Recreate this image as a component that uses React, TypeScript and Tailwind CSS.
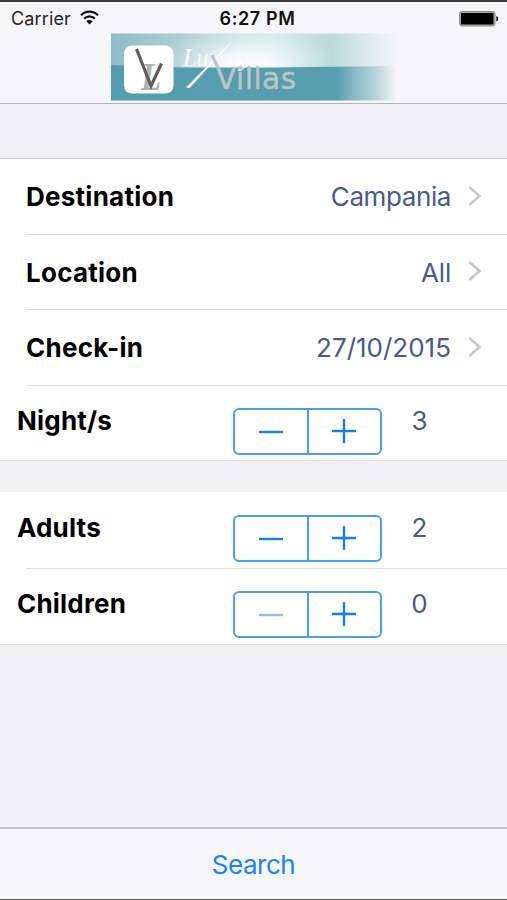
// App.tsx
import React from 'react';

type LinkRowProps = {
  label: string;
  value: string;
  rowClass?: string;
  valueClass?: string;
};

type StepperRowProps = {
  label: string;
  value: number;
  rowClass?: string;
  min?: number;
};

const Divider: React.FC = () => <div className="ml-[26px] h-px shrink-0 bg-[#e0e0e3]" />;

const StatusBar: React.FC = () => (
  <div className="grid h-[31px] grid-cols-3 items-center pl-[11px] pr-[8px] pt-[2px]">
    <div className="flex items-center">
      <span className="text-[18px] leading-none tracking-[0.15px] text-[#252525]">Carrier</span>
      <svg className="-mt-[2px] ml-[9px]" width="19" height="15" viewBox="0 0 19 15" fill="none" stroke="#111" strokeWidth="2.3">
        <path d="M1 5.2C5.8 0.4 13.2 0.4 18 5.2" />
        <path d="M4.2 8.6C7.3 5.6 11.7 5.6 14.8 8.6" />
        <path d="M9.5 14.4L6.3 11.2C8.1 9.5 10.9 9.5 12.7 11.2Z" fill="#111" stroke="none" />
      </svg>
    </div>
    <span className="pl-[5px] text-center text-[18px] font-semibold leading-none tracking-[0.6px] text-[#111]">6:27 PM</span>
    <div className="flex justify-end">
      <svg width="40" height="16" viewBox="0 0 40 16">
        <rect x="0.5" y="0.5" width="35.5" height="14.5" rx="2.5" fill="#aaa" stroke="#888" />
        <rect x="2" y="2" width="32.5" height="11.5" rx="1" fill="#000" />
        <path d="M37.3 5v5.5q2-.8 2-2.75t-2-2.75" fill="#111" />
      </svg>
    </div>
  </div>
);

const Banner: React.FC = () => (
  <svg className="ml-[111px] block" width="286" height="68" viewBox="0 0 286 68">
    <defs>
      <linearGradient id="sky" x1="0" x2="1" y1="0" y2="0">
        <stop offset="0" stopColor="#8fbcc8" />
        <stop offset="0.25" stopColor="#add0d6" />
        <stop offset="0.42" stopColor="#c2dde1" />
        <stop offset="0.57" stopColor="#d3e8ea" />
        <stop offset="0.77" stopColor="#badadd" />
        <stop offset="0.86" stopColor="#d4e5e8" />
        <stop offset="1" stopColor="#f6f6f8" />
      </linearGradient>
      <radialGradient id="sun" cx="0.5" cy="0.5" r="0.5">
        <stop offset="0" stopColor="#fff" />
        <stop offset="0.25" stopColor="#fff" stopOpacity="0.85" />
        <stop offset="0.6" stopColor="#fff" stopOpacity="0.35" />
        <stop offset="1" stopColor="#fff" stopOpacity="0" />
      </radialGradient>
      <linearGradient id="sea" x1="0" x2="1" y1="0" y2="0">
        <stop offset="0" stopColor="#559cae" />
        <stop offset="0.79" stopColor="#579faf" />
        <stop offset="0.85" stopColor="#87b9c5" />
        <stop offset="0.93" stopColor="#b9d5db" />
        <stop offset="1" stopColor="#f6f6f8" />
      </linearGradient>
    </defs>
    <rect y="0.5" width="286" height="36" fill="url(#sky)" />
    <ellipse cx="134" cy="33" rx="88" ry="42" fill="url(#sun)" />
    <path d="M0 32L70 34.5H160L286 33V67.5H0Z" fill="url(#sea)" />
    <rect x="13" y="12.5" width="49.5" height="48" rx="8" fill="#fff" />
    <text x="30" y="57" fontSize="39" fill="#b3b3b3" fontStyle="italic" fontWeight="bold" textLength="20" lengthAdjust="spacingAndGlyphs" className="font-['Liberation_Serif',serif]">L</text>
    <path d="M25.5 16L40 53L50.5 30.5" fill="none" stroke="#5e5e5e" strokeWidth="3.2" />
    <text x="72" y="32.5" fontSize="25" fill="#f5fafa" fontStyle="italic" textLength="68" className="font-['Liberation_Serif',serif]">Luxury</text>
    <path d="M75 54.5L117 12L120 10L78.5 55Z" fill="#fff" />
    {/* long left arm of the V */}
    <path d="M101 22L107.5 36" stroke="#bfc5c6" strokeWidth="3" />
    <text x="105" y="55.5" fontSize="29.5" fill="#bfc5c6" stroke="#bfc5c6" strokeWidth="0.4" textLength="80" className="font-['DejaVu_Sans',sans-serif]">Villas</text>
  </svg>
);

const LinkRow: React.FC<LinkRowProps> = ({ label, value, rowClass = 'h-[75px]', valueClass = '' }) => (
  <div className={`flex items-center pl-[26px] pr-[25px] ${rowClass}`}>
    <span className="text-[26px] font-bold tracking-[0.25px] text-black">{label}</span>
    <span className={`ml-auto text-[26px] text-[#465b8e] ${valueClass}`}>{value}</span>
    <svg className="-mt-[2px] ml-[17px]" width="14" height="22" viewBox="0 0 14 22" fill="none" stroke="#c7c7cc" strokeWidth="2.5">
      <path d="M1.5 2L11.5 11L1.5 20" />
    </svg>
  </div>
);

const Stepper: React.FC<{ canDecrease: boolean }> = ({ canDecrease }) => (
  <div className="flex h-[47px] w-[149px] rounded-[6px] border-2 border-[#4b9bf3] text-[#1680f3]">
    <button className="flex w-[74px] items-center justify-center border-r-2 border-[#4b9bf3]">
      <svg width="26" height="26" viewBox="0 0 26 26" stroke={canDecrease ? 'currentColor' : '#92bdec'} strokeWidth="2.4">
        <path d="M1 13H25" />
      </svg>
    </button>
    <button className="flex flex-1 items-center justify-center pb-px pr-[2px]">
      <svg width="26" height="26" viewBox="0 0 26 26" stroke="currentColor" strokeWidth="2.4">
        <path d="M1 13H25M13 1V25" />
      </svg>
    </button>
  </div>
);

const StepperRow: React.FC<StepperRowProps> = ({ label, value, rowClass = 'h-[75px]', min = 0 }) => (
  <div className={`flex pl-[17px] ${rowClass}`}>
    <span className="w-[216px] pt-[18px] text-[26px] font-bold leading-[34px] tracking-[0.2px] text-black">{label}</span>
    <div className="pt-[22px]">
      <Stepper canDecrease={value > min} />
    </div>
    <span className="w-[75px] pt-[18px] text-center text-[26px] leading-[34px] text-[#465b8e]">{value}</span>
  </div>
);

const App: React.FC = () => {
  return (
    <div className="flex h-[900px] w-[507px] flex-col overflow-hidden border-b border-t-2 border-b-[#555] border-t-[#3e3c3f] bg-[#efeff4] font-['Inter','Liberation_Sans',sans-serif]">
      <header className="h-[102px] shrink-0 border-b border-[#b5b5b9] bg-[#f6f6f8]">
        <StatusBar />
        <Banner />
      </header>

      {/* Where and when */}
      <section className="mt-[54px] border-b border-t border-b-[#e2e2e5] border-t-[#c9c9cd] bg-white">
        <LinkRow label="Destination" value="Campania" valueClass="tracking-[-0.4px]" />
        <Divider />
        <LinkRow label="Location" value="All" rowClass="h-[74px]" valueClass="tracking-[-0.2px]" />
        <Divider />
        <LinkRow label="Check-in" value="27/10/2015" />
        <Divider />
        <StepperRow label="Night/s" value={3} rowClass="h-[74px]" />
      </section>

      {/* Guests */}
      <section className="mt-[31px] border-b border-[#d8d8dc] bg-white pt-px">
        <StepperRow label="Adults" value={2} />
        <Divider />
        <StepperRow label="Children" value={0} />
      </section>

      <footer className="mt-auto flex h-[72px] items-center justify-center border-t-2 border-[#c2c2c6] bg-[#f6f6f8]">
        <button className="text-[26px] tracking-[-0.5px] text-[#1b83f5]">Search</button>
      </footer>
    </div>
  );
};

export default App;
